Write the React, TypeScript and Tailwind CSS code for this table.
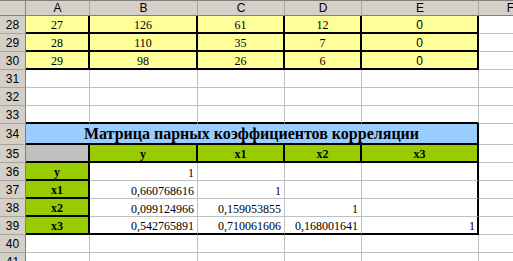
import type { ReactNode } from "react";

// Sheet geometry: row-number column, columns A–F
const colLetters = ["A", "B", "C", "D", "E", "F"];

const yellowRows = [
  ["27", "126", "61", "12", "0"],
  ["28", "110", "35", "7", "0"],
  ["29", "98", "26", "6", "0"],
];

const corrRows: [string, string[]][] = [
  ["y", ["1", "", "", ""]],
  ["x1", ["0,660768616", "1", "", ""]],
  ["x2", ["0,099124966", "0,159053855", "1", ""]],
  ["x3", ["0,542765891", "0,710061606", "0,168001641", "1"]],
];

const serif = "font-['Liberation_Serif','Times_New_Roman',serif]";
const sans = "font-['Liberation_Sans',Arial,sans-serif]";

function Cell({ className = "", children }: { className?: string; children?: ReactNode }) {
  return <div className={`box-border flex min-w-0 overflow-hidden ${className}`}>{children}</div>;
}

function RowHead({ n }: { n: number }) {
  return (
    <Cell className={`items-center justify-center bg-[#d4d0c8] border-r border-b border-r-[#808080] border-b-[#a8a59e] text-[12px] text-black ${sans}`}>
      {n}
    </Cell>
  );
}

function Blank({ className = "" }: { className?: string }) {
  return <Cell className={`bg-white border-r border-b border-[#c0c0c0] ${className}`} />;
}

export default function App() {
  return (
    <div className="w-[513px] h-[261px] overflow-hidden bg-white">
      <div className="grid w-[543px] grid-cols-[26px_64px_108px_87px_77px_117px_64px] grid-rows-[16px_repeat(6,18px)_21px_repeat(7,18px)]">
        {/* column headers */}
        <Cell className="bg-[#d4d0c8] border-t border-r border-b border-t-[#808080] border-r-[#808080] border-b-[#808080]" />
        {colLetters.map((c) => (
          <Cell
            key={c}
            className={`items-center justify-center bg-[#d4d0c8] border-t border-r border-b border-t-[#808080] border-r-[#a8a59e] border-b-[#808080] text-[12px] leading-none text-black ${sans}`}
          >
            {c}
          </Cell>
        ))}

        {/* source data, rows 28–30 */}
        {yellowRows.map((row, i) => (
          <div key={i} className="contents">
            <RowHead n={28 + i} />
            {row.map((v, j) => (
              <Cell
                key={j}
                className={`items-end justify-center bg-[#ffff99] border-r-2 border-b-2 border-black text-[12px] leading-[14px] text-black ${j === 4 ? sans : serif}`}
              >
                {v}
              </Cell>
            ))}
            <Blank />
          </div>
        ))}

        {/* empty rows 31–33 */}
        {[31, 32, 33].map((n) => (
          <div key={n} className="contents">
            <RowHead n={n} />
            {[0, 1, 2, 3, 4].map((j) => (
              <Blank key={j} className={n === 33 ? "border-b-2 border-b-black" : ""} />
            ))}
            <Blank />
          </div>
        ))}

        {/* correlation matrix title */}
        <RowHead n={34} />
        <Cell className={`col-span-5 items-center justify-center bg-[#99ccff] border-r-2 border-b-2 border-black pt-[1px] text-[16px] font-bold leading-none text-black ${serif}`}>
          Матрица парных коэффициентов корреляции
        </Cell>
        <Blank />

        {/* matrix header */}
        <RowHead n={35} />
        <Cell className="bg-[#c0c0c0] border-r-2 border-b-2 border-black" />
        {["y", "x1", "x2", "x3"].map((h) => (
          <Cell
            key={h}
            className={`items-end justify-center bg-[#99cc00] border-r-2 border-b-2 border-black text-[12px] font-bold leading-[14px] text-black ${serif}`}
          >
            {h}
          </Cell>
        ))}
        <Blank />

        {/* matrix body */}
        {corrRows.map(([label, vals], i) => (
          <div key={label} className="contents">
            <RowHead n={36 + i} />
            <Cell className={`items-end justify-center bg-[#99cc00] border-r-2 border-b-2 border-black text-[12px] font-bold leading-[14px] text-black ${serif}`}>
              {label}
            </Cell>
            {vals.map((v, j) => (
              <Cell
                key={j}
                className={`items-end justify-end bg-white text-[12px] leading-[14px] text-black ${serif} ${
                  j === 3 ? "border-r-2 border-r-black pr-[2px]" : "border-r border-r-[#c0c0c0] pr-[3px]"
                } ${i === 3 ? "border-b-2 border-b-black" : "border-b border-b-[#c0c0c0]"}`}
              >
                {v}
              </Cell>
            ))}
            <Blank />
          </div>
        ))}

        {/* trailing rows */}
        {[40, 41].map((n) => (
          <div key={n} className="contents">
            <RowHead n={n} />
            {[0, 1, 2, 3, 4, 5].map((j) => (
              <Blank key={j} />
            ))}
          </div>
        ))}
      </div>
    </div>
  );
}
